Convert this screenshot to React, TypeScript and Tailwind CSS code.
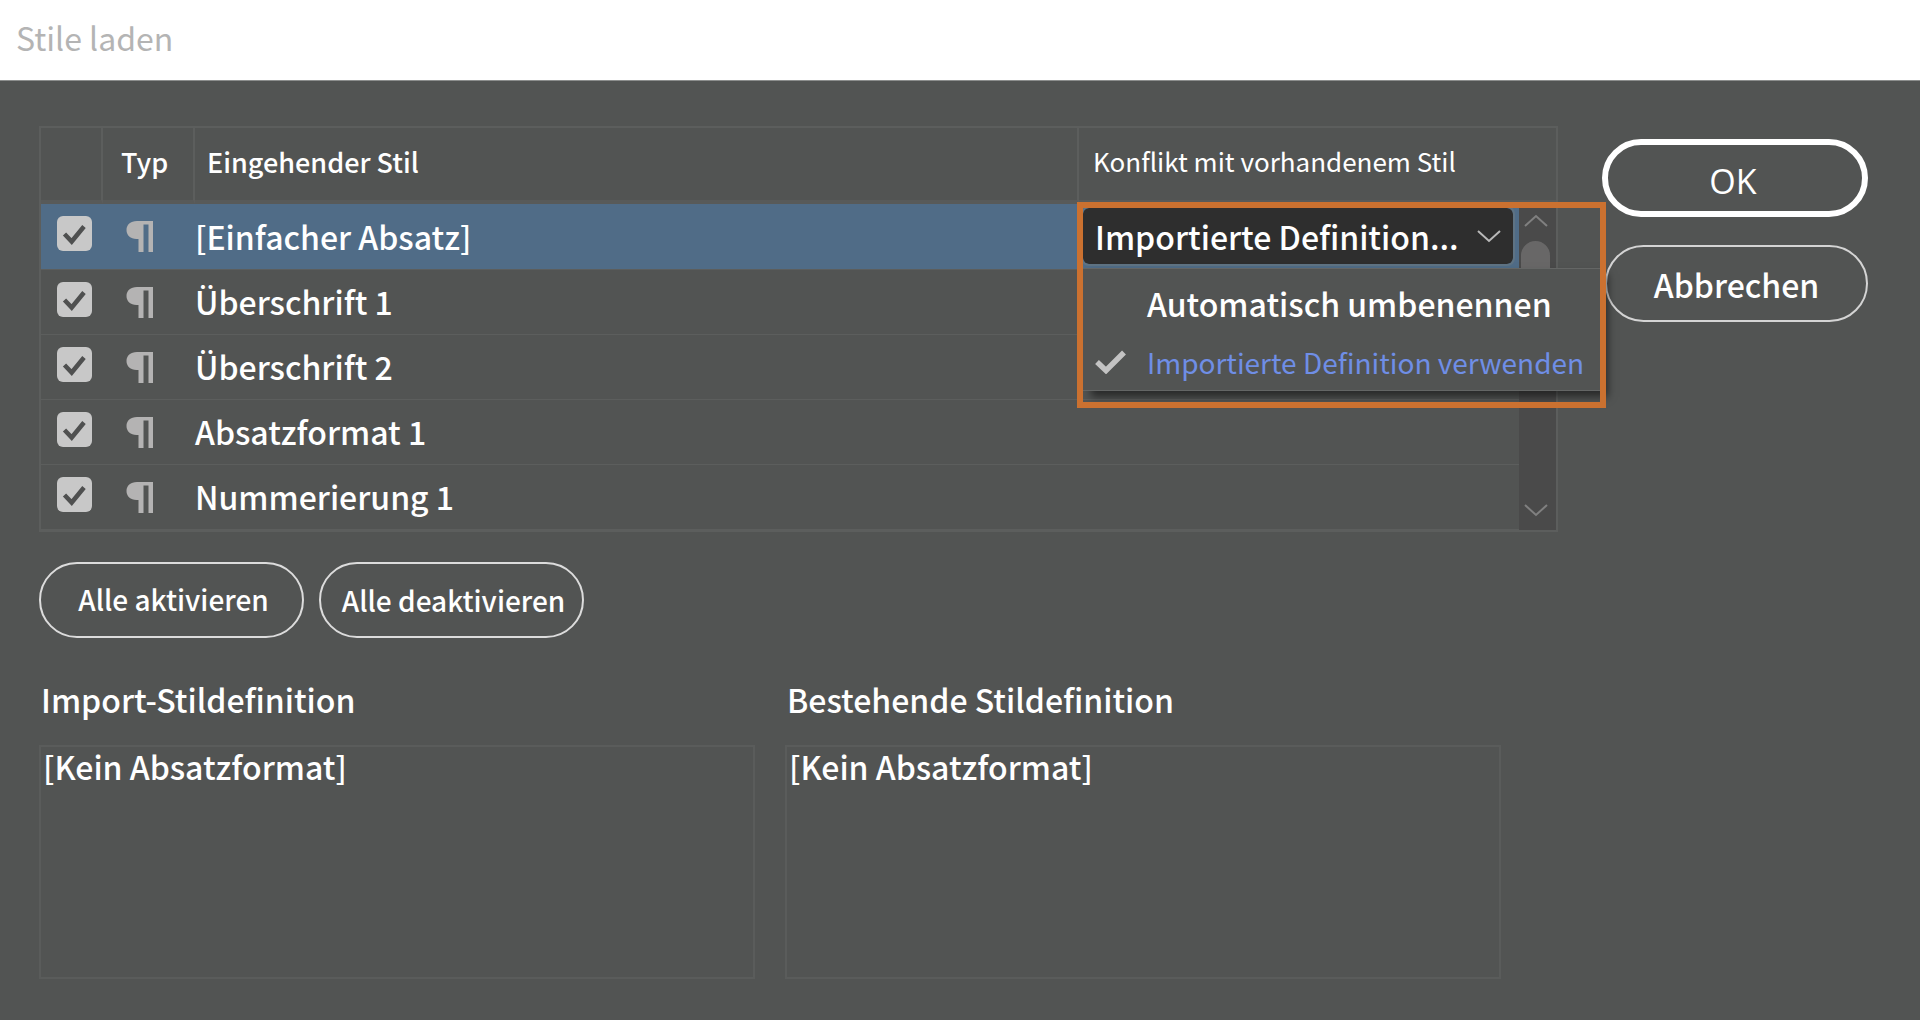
import { useState } from "react";

const STYLES = [
  "[Einfacher Absatz]",
  "Überschrift 1",
  "Überschrift 2",
  "Absatzformat 1",
  "Nummerierung 1",
];

function Pilcrow() {
  return (
    <svg width="28" height="33" viewBox="0 0 28 33" aria-label="Absatz" role="img" className="block">
      <path d="M11 1H27v31h-4.500V4.500h-5V32h-5V19H10.500C4.500 19 0.500 15.200 0.500 10S4.500 1 11 1Z" fill="#b4b3b3" />
    </svg>
  );
}

function StyleCheckbox({ name }: { name: string }) {
  const [on, setOn] = useState(true);
  return (
    <span className="relative block size-[35px]">
      <input
        type="checkbox"
        aria-label={name}
        checked={on}
        onChange={(e) => setOn(e.target.checked)}
        className="block size-[35px] appearance-none rounded-md bg-[#c8c8c8]"
      />
      {on && (
        <svg viewBox="0 0 35 35" className="pointer-events-none absolute inset-0" fill="none">
          <path d="M7.500 18 14.700 25.500 27 10.500" stroke="#4f5050" strokeWidth="4.500" />
        </svg>
      )}
    </span>
  );
}

function Chevron({ up = false, color }: { up?: boolean; color: string }) {
  return (
    <svg width="24" height="13" viewBox="0 0 24 13" fill="none" className="block">
      <path d={up ? "M1 12 12 2 23 12" : "M1 1 12 11 23 1"} stroke={color} strokeWidth="2" />
    </svg>
  );
}

function ConflictPicker() {
  return (
    <div className="relative h-[65px]">
      <div className="relative ml-1 h-[65px] w-[430px] pt-1">
        <select
          aria-label="Konflikt mit vorhandenem Stil"
          className="block h-[56px] w-full appearance-none rounded-md bg-[#2e2e2e] pl-3 text-[32px] leading-[52px] text-white outline-2 outline-[#5f7383]"
        >
          <option>Importierte Definition...</option>
        </select>
        <span className="pointer-events-none absolute top-[26px] right-3">
          <Chevron color="#b9b9b9" />
        </span>
      </div>
      <div className="absolute top-[64px] left-1 z-10 h-[123px] w-[517px] border-y border-[#646665] bg-[#525453] shadow-[8px_6px_8px_rgba(0,0,0,0.5)]">
        <button type="button" className="block h-[68px] w-full pl-16 text-left text-[32px] leading-[66px] whitespace-nowrap text-white">
          Automatisch umbenennen
        </button>
        <button type="button" className="flex h-[50px] w-full items-center pl-3 text-left text-[28px] leading-[44px] font-normal whitespace-nowrap text-[#6f8ee6]">
          <svg width="32" height="24" viewBox="0 0 32 24" fill="none" className="mr-5 shrink-0">
            <path d="M2 12 11 20.500 29 2.500" stroke="#c3c3c3" strokeWidth="5.500" />
          </svg>
          Importierte Definition verwenden
        </button>
      </div>
      <div className="pointer-events-none absolute -top-[2px] -left-[2px] z-20 h-[206px] w-[529px] border-[6px] border-[#cb7130]" />
    </div>
  );
}

function Definition({ id, label }: { id: string; label: string }) {
  return (
    <div className="min-w-0 flex-1">
      <label htmlFor={id} className="block pl-0.5 text-[32px] leading-[48px]">
        {label}
      </label>
      <textarea
        id={id}
        readOnly
        defaultValue="[Kein Absatzformat]"
        className="mt-[22px] block h-[234px] w-full resize-none border-2 border-[#5a5c5b] px-0.5 text-[32px] leading-[38px] outline-none"
      />
    </div>
  );
}

export default function App() {
  return (
    <div className="flex min-h-screen flex-col bg-[#525453] font-['Noto_Sans_CJK_SC','Noto_Sans',sans-serif] font-medium text-white">
      <header className="h-[81px] border-b border-[#8c8e8d] bg-white pt-[13px] pl-4">
        <h1 className="text-[32px] leading-[48px] font-normal text-[#b4b4b4]">Stile laden</h1>
      </header>

      <main className="pt-[45px] pr-[52px] pb-10 pl-[39px]">
        <div className="flex items-start gap-[44px]">
          <table className="flex-1 table-fixed border-separate border-spacing-0 border-2 border-[#5c5e5d]">
            <colgroup>
              <col className="w-[62px]" />
              <col className="w-[92px]" />
              <col />
              <col className="w-[440px]" />
              <col className="w-[37px]" />
            </colgroup>
            <thead>
              <tr className="h-[76px] text-left text-[27px] leading-[40px]">
                <th className="border-r-2 border-b-4 border-r-[#5c5e5d] border-b-[#585a59] p-0"></th>
                <th className="border-r-2 border-b-4 border-r-[#5c5e5d] border-b-[#585a59] p-0 pb-1 pl-[18px] font-medium">
                  Typ
                </th>
                <th className="border-r-2 border-b-4 border-r-[#5c5e5d] border-b-[#585a59] p-0 pb-1 pl-3 font-medium">
                  Eingehender Stil
                </th>
                <th
                  colSpan={2}
                  className="border-b-4 border-[#585a59] p-0 pb-1.5 pl-3.5 text-[26px] font-normal whitespace-nowrap"
                >
                  Konflikt mit vorhandenem Stil
                </th>
              </tr>
            </thead>
            <tbody>
              {STYLES.map((name, i) => (
                <tr key={name} className={i === 0 ? "h-[65px] bg-[#506c87]" : "h-[65px]"}>
                  <td className="border-b border-[#5c5e5d] p-0 pb-1.5 pl-4">
                    <StyleCheckbox name={name} />
                  </td>
                  <td className="border-b border-[#5c5e5d] p-0 pl-[23px]">
                    <Pilcrow />
                  </td>
                  <td className="border-b border-[#5c5e5d] p-0 pb-0.5 text-[32px] leading-[60px] whitespace-nowrap">{name}</td>
                  <td className="border-b border-[#5c5e5d] p-0">{i === 0 && <ConflictPicker />}</td>
                  {i === 0 && (
                    <td rowSpan={5} className="h-[325px] bg-[#4a4a4a] p-0 align-top">
                      <div className="flex h-[325px] flex-col items-center pt-2.5 pr-1 pb-3">
                        <Chevron up color="#808080" />
                        <div className="mt-3.5 h-[60px] w-[29px] rounded-full bg-[#686767]" />
                        <div className="mt-auto">
                          <Chevron color="#808080" />
                        </div>
                      </div>
                    </td>
                  )}
                </tr>
              ))}
            </tbody>
          </table>

          <div className="flex w-[266px] flex-col gap-7 pt-[13px]">
            <button
              type="button"
              className="h-[78px] rounded-full border-[6px] border-white pt-1.5 pr-1 font-['Open_Sans',sans-serif] text-[34px] font-normal"
            >
              OK
            </button>
            <button type="button" className="ml-[3px] h-[77px] rounded-full border-2 border-[#d4d4d4] text-[32px]">
              Abbrechen
            </button>
          </div>
        </div>

        <div className="mt-[30px] flex gap-[15px]">
          <button type="button" className="h-[76px] w-[265px] rounded-full border-2 border-[#dcdcdc] pb-0.5 pl-1 text-[28px]">
            Alle aktivieren
          </button>
          <button type="button" className="h-[76px] w-[265px] rounded-full border-2 border-[#dcdcdc] pl-1 text-[28px]">
            Alle deaktivieren
          </button>
        </div>

        <div className="mt-[37px] mr-[367px] flex gap-[30px]">
          <Definition id="incoming" label="Import-Stildefinition" />
          <Definition id="existing" label="Bestehende Stildefinition" />
        </div>
      </main>
    </div>
  );
}
